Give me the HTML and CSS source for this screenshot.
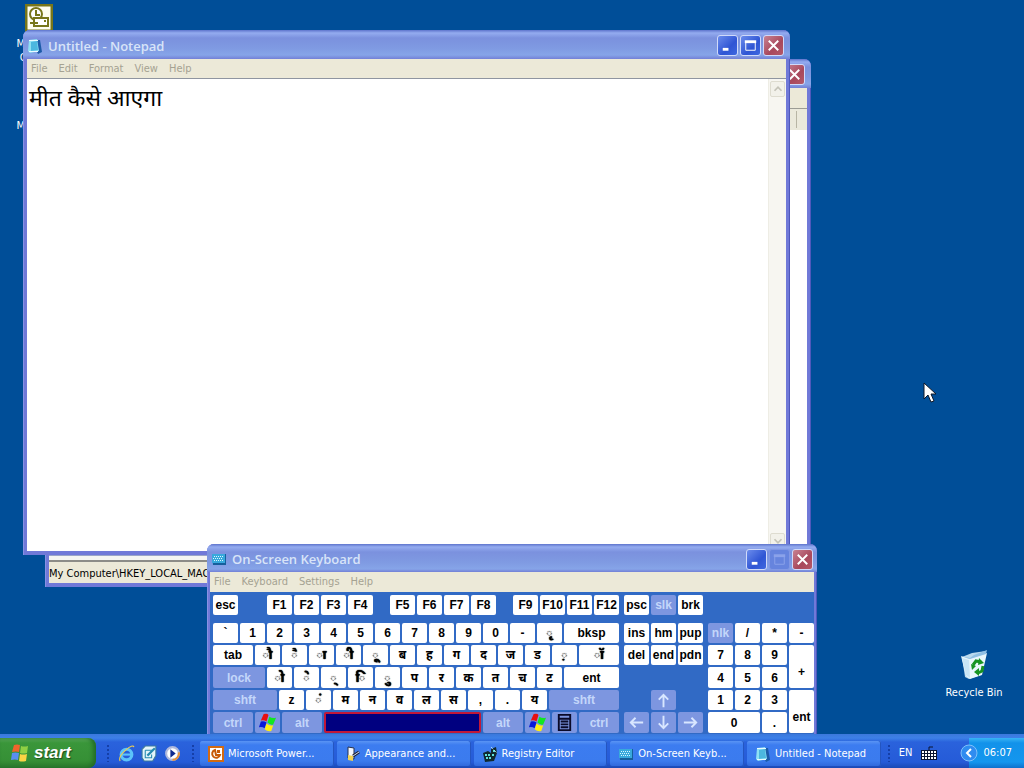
FILE: index.html
```
<!DOCTYPE html>
<html lang="en">
  <head>
    <meta charset="UTF-8" />
    <title>Desktop</title>
    <link rel="stylesheet" href="styles.css">
  </head>
  <body>
    <svg class="defs" aria-hidden="true">
      <symbol id="flag" viewBox="0 0 20 20">
        <path fill="#e81010" d="M6 1q4-1 5 1l-2 7q-3-2-6-1z" />
        <path fill="#10e820" d="M12 4q3 2 7 1l-3 7q-3 1-6-2z" />
        <path fill="#0818d8" d="M3 9q3-1 6 1l-2 6q-3-2-6-1z" />
        <path fill="#ffee10" d="M9 11q3 3 7 2l-2 6q-4 1-7-2z" />
      </symbol>
      <symbol id="pad" viewBox="0 0 16 16">
        <path fill="#1c5ba8" d="M4 2l9 0 2 12-4 2z" />
        <path fill="#8ee0f4" d="M2 2l8-1 2 12-9 2-2-2z" />
        <path fill="#4cb7df" d="M4 4l6-1 1 9-7 1z" />
        <path stroke="#e8fbff" d="M2 2.500h9M2 13.500h9" />
      </symbol>
      <symbol id="keys" viewBox="0 0 16 16">
        <path fill="#155f9c" d="M1 3h14v11H2z" />
        <path fill="#38a9dc" d="M1 3h13v9H1z" />
        <path stroke="#d8f8ff" stroke-dasharray="1 1" d="M3 5.500h9M2 7.500h10M3 9.500h9" />
      </symbol>
    </svg>

    <main class="desktop">
      <a class="shortcut outlook" href="#">
        <svg width="28" height="28" viewBox="0 0 28 28">
          <rect x="1" y="1" width="26" height="26" fill="#fdfdf0" stroke="#77761a" stroke-width="3" />
          <circle cx="11" cy="10" r="6" fill="#fff" stroke="#77761a" stroke-width="2" />
          <path d="M11 6v5h4" fill="none" stroke="#77761a" stroke-width="2" />
          <rect x="9" y="14" width="14" height="8" fill="#fff" stroke="#77761a" stroke-width="2" />
          <path d="M5 19h8M19 17h2" stroke="#77761a" stroke-width="2" />
        </svg>
        <span>Microsoft Outlook</span>
      </a>
      <a class="shortcut network" href="#"><span>Microsoft</span></a>
      <a class="shortcut recycle" href="#">
        <svg width="32" height="32" viewBox="0 0 32 32">
          <path fill="#b9d9ee" d="M4 8l10-4 14-2-5 24-12 4-4-2z" />
          <path fill="#e8f6fc" d="M3 7l8 3 18-6-5 22-12 4-4-3z" />
          <path fill="#8fbfe4" d="M3 7l9 2 4-3 13-5-1 4-16 5z" />
          <path fill="#c8e5f6" d="M4 9l7 2 1 18-4-3z" />
          <path fill="none" stroke="#169322" stroke-width="3" d="M15 16l3-4 5 1M25 17l-1 5-4 2" />
          <path fill="#169322" d="M21 9l5 5-6 2zM21 19v8l-5-4zM13 15l5 2-4 4z" />
        </svg>
        <span>Recycle Bin</span>
      </a>

      <section class="window registry" aria-label="Registry Editor">
        <header class="titlebar">
          <span class="caption"></span>
          <button class="control close" aria-label="Close"><svg viewBox="0 0 20 20"><path d="M5 5l10 10M15 5L5 15" /></svg></button>
        </header>
        <div class="menubar"></div>
        <div class="columns"><i></i></div>
        <div class="pane"></div>
        <div class="hscroll"></div>
        <footer class="statusbar">My Computer\HKEY_LOCAL_MACHINE</footer>
      </section>

      <section class="window notepad" aria-label="Notepad">
        <header class="titlebar">
          <svg class="icon"><use href="#pad" /></svg>
          <span class="caption">Untitled - Notepad</span>
          <button class="control" aria-label="Minimize"><svg viewBox="0 0 20 20"><path class="bar" d="M5 14h6" /></svg></button>
          <button class="control" aria-label="Maximize"><svg viewBox="0 0 20 20"><path class="thin" d="M5 6v9h10V6" /><path class="bar" d="M4 6h12" /></svg></button>
          <button class="control close" aria-label="Close"><svg viewBox="0 0 20 20"><path d="M5 5l10 10M15 5L5 15" /></svg></button>
        </header>
        <nav class="menubar">
          <button>File</button><button>Edit</button><button>Format</button><button>View</button><button>Help</button>
        </nav>
        <div class="editor">
          <textarea aria-label="Text" spellcheck="false">मीत कैसे आएगा</textarea>
          <div class="scroll">
            <button aria-label="Scroll up"><svg viewBox="0 0 16 16"><path d="M4 10l4-4 4 4" /></svg></button>
            <button aria-label="Scroll down"><svg viewBox="0 0 16 16"><path d="M4 6l4 4 4-4" /></svg></button>
          </div>
        </div>
      </section>

      <section class="window osk" aria-label="On-Screen Keyboard">
        <header class="titlebar">
          <svg class="icon"><use href="#keys" /></svg>
          <span class="caption">On-Screen Keyboard</span>
          <button class="control" aria-label="Minimize"><svg viewBox="0 0 20 20"><path class="bar" d="M5 14h6" /></svg></button>
          <button class="control off" disabled aria-label="Maximize"><svg viewBox="0 0 20 20"><path class="thin" d="M5 6v9h10V6" /><path class="bar" d="M4 6h12" /></svg></button>
          <button class="control close" aria-label="Close"><svg viewBox="0 0 20 20"><path d="M5 5l10 10M15 5L5 15" /></svg></button>
        </header>
        <nav class="menubar">
          <button>File</button><button>Keyboard</button><button>Settings</button><button>Help</button>
        </nav>
        <div class="keyboard">
          <div class="frow">
            <div class="keys escape"><button>esc</button></div>
            <div class="keys"><button>F1</button><button>F2</button><button>F3</button><button>F4</button></div>
            <div class="keys"><button>F5</button><button>F6</button><button>F7</button><button>F8</button></div>
            <div class="keys"><button>F9</button><button>F10</button><button>F11</button><button>F12</button></div>
          </div>
          <div class="keys"><button>psc</button><button class="mod">slk</button><button>brk</button></div>
          <div></div>

          <div class="rows">
            <div class="keys"><button>`</button><button>1</button><button>2</button><button>3</button><button>4</button><button>5</button><button>6</button><button>7</button><button>8</button><button>9</button><button>0</button><button>-</button><button class="sign">ृ</button><button class="fill">bksp</button></div>
            <div class="keys"><button class="w40">tab</button><button class="sign">ौ</button><button class="sign">ै</button><button class="sign">ा</button><button class="sign">ी</button><button class="sign">ू</button><button>ब</button><button>ह</button><button>ग</button><button>द</button><button>ज</button><button>ड</button><button class="sign">़</button><button class="sign fill">ॉ</button></div>
            <div class="keys"><button class="mod w52">lock</button><button class="sign">ो</button><button class="sign">े</button><button class="sign">्</button><button class="sign">ि</button><button class="sign">ु</button><button>प</button><button>र</button><button>क</button><button>त</button><button>च</button><button>ट</button><button class="fill">ent</button></div>
            <div class="keys"><button class="mod w64">shft</button><button>z</button><button class="sign">ं</button><button>म</button><button>न</button><button>व</button><button>ल</button><button>स</button><button>,</button><button>.</button><button>य</button><button class="mod fill">shft</button></div>
            <div class="keys">
              <button class="mod w40">ctrl</button>
              <button class="mod" aria-label="Windows"><svg><use href="#flag" /></svg></button>
              <button class="mod w40">alt</button>
              <button class="space fill" aria-label="Space"></button>
              <button class="mod w40">alt</button>
              <button class="mod" aria-label="Windows"><svg><use href="#flag" /></svg></button>
              <button class="mod" aria-label="Menu"><svg viewBox="0 0 20 20"><path fill="none" stroke="#0a0a28" stroke-width="2" d="M4 2h12v16H4zM4 6h12M6 9h8M6 12h8M6 15h8" /></svg></button>
              <button class="mod w40">ctrl</button>
            </div>
          </div>

          <div class="nav">
            <button>ins</button><button>hm</button><button>pup</button>
            <button>del</button><button>end</button><button>pdn</button>
            <button class="mod up" aria-label="Up"><svg viewBox="0 0 20 20"><path class="arrow" d="M10 17V5M5 9l5-5 5 5" /></svg></button>
            <button class="mod left" aria-label="Left"><svg viewBox="0 0 20 20"><path class="arrow" d="M17 10H5M9 5l-5 5 5 5" /></svg></button>
            <button class="mod down" aria-label="Down"><svg viewBox="0 0 20 20"><path class="arrow" d="M10 3v12M5 11l5 5 5-5" /></svg></button>
            <button class="mod right" aria-label="Right"><svg viewBox="0 0 20 20"><path class="arrow" d="M3 10h12M11 5l5 5-5 5" /></svg></button>
          </div>

          <div class="numpad">
            <button class="mod">nlk</button><button>/</button><button>*</button><button>-</button>
            <button>7</button><button>8</button><button>9</button><button class="tall">+</button>
            <button>4</button><button>5</button><button>6</button>
            <button>1</button><button>2</button><button>3</button><button class="tall">ent</button>
            <button class="wide">0</button><button>.</button>
          </div>
        </div>
      </section>

      <svg class="cursor" viewBox="0 0 13 22"><path fill="#fff" stroke="#101828" d="M1 1v16l4-4 3 7 3-1-3-7h5z" /></svg>
    </main>

    <footer class="taskbar">
      <button class="start">
        <svg viewBox="0 0 20 20">
          <path fill="#f0642c" d="M4 2q3-1 6 0l-1 7q-3-1-7 0z" />
          <path fill="#8fd044" d="M11 3q3 1 7 0l-1 7q-4 1-7 0z" />
          <path fill="#5a8ef0" d="M2 10q3-1 7 0l-1 7q-3-1-7 0z" />
          <path fill="#fbd444" d="M10 11q3 1 7 0l-1 7q-4 1-7 0z" />
        </svg>
        start
      </button>
      <i class="grip"></i>
      <nav class="quick">
        <button aria-label="Internet Explorer"><svg viewBox="0 0 16 16"><circle cx="8" cy="9" r="5" fill="none" stroke="#5cc4fa" stroke-width="3" /><path stroke="#5cc4fa" stroke-width="2" d="M4 9h9" /><path d="M2 15Q0 11 7 5t8-3" fill="none" stroke="#f0cf50" stroke-width="1" /></svg></button>
        <button aria-label="Show Desktop"><svg viewBox="0 0 16 16"><path fill="#e4f4fa" stroke="#3c7a9c" d="M1 4l3-3h10v9l-3 5H3l-2-3z" /><path fill="none" stroke="#268ab0" stroke-width="1" d="M4 5h7M4 5v7h6V9" /><path stroke="#268ab0" stroke-width="2" d="M6 10l7-7" /></svg></button>
        <button aria-label="Media Player"><svg viewBox="0 0 16 16"><circle cx="8" cy="8" r="6" fill="#fff" stroke="#b0b9dc" stroke-width="2" /><path fill="none" stroke="#e8913a" stroke-width="2" d="M14 7a6 6 0 0 1-6 7" /><path fill="#102a90" d="M6 4l5 4-5 4z" /></svg></button>
      </nav>
      <i class="grip"></i>
      <div class="tasks">
        <button><svg class="icon" viewBox="0 0 16 16"><rect x="1" y="1" width="14" height="14" fill="#fff" stroke="#d26a12" stroke-width="2" /><path fill="none" stroke="#c85a08" stroke-width="2" d="M7 4a4 4 0 1 0 5 5H8z" /><path fill="#c85a08" d="M9 4h3v3H9z" /></svg>Microsoft Power...</button>
        <button><svg class="icon" viewBox="0 0 16 16"><path fill="#f4f8ff" stroke="#26304c" d="M3 1l6 1v11l-6-1z" /><path fill="#f0d254" d="M3 9l5 1v5l-5-1z" /><path stroke="#223" stroke-width="3" d="M8 10l6-4" /><path stroke="#cfe3ff" d="M8 10l6-4" /></svg>Appearance and...</button>
        <button><svg class="icon" viewBox="0 0 16 16"><path fill="#10292f" d="M1 7l5-2 3 2V3l5-2 1 6-3 8-9 1z" /><path fill="#5fe0da" d="M3 8h2v2H3zM6 8h2v2H6zM4 11h2v2H4zM7 11h2v2H7zM11 4h2v2h-2zM10 8h2v2h-2z" /><path stroke="#d8ffff" stroke-dasharray="1 1" d="M9 1l6 6" /></svg>Registry Editor</button>
        <button><svg class="icon"><use href="#keys" /></svg>On-Screen Keyb...</button>
        <button><svg class="icon"><use href="#pad" /></svg>Untitled - Notepad</button>
      </div>
      <i class="grip"></i>
      <div class="lang">
        EN
        <svg width="16" height="16" viewBox="0 0 16 16"><path fill="none" stroke="#0a1430" d="M8 5V2h4" /><rect x="0" y="5" width="16" height="10" fill="#0a1430" /><path stroke="#fff" stroke-width="2" stroke-dasharray="2 1" d="M1 7h14M1 10h14M1 13h14" /></svg>
      </div>
      <div class="tray">
        <button class="expand" aria-label="Show hidden icons"><svg viewBox="0 0 18 18"><circle cx="9" cy="9" r="8" fill="#2f8cf0" stroke="#7fc0fa" /><path fill="none" stroke="#fff" stroke-width="2" d="M11 5L7 9l4 4" /></svg></button>
        <time>06:07</time>
      </div>
    </footer>
  </body>
</html>
```
FILE: styles.css
```
* {
  box-sizing: border-box;
}
body {
  margin: 0;
  height: 100vh;
  display: flex;
  flex-direction: column;
  overflow: hidden;
  background: #004e98;
  font: 11px/14px "DejaVu Sans Condensed", "Noto Sans", sans-serif;
  color: #000;
}
button {
  margin: 0;
  padding: 0;
  border: none;
  background: transparent;
  font: inherit;
  color: inherit;
}
.defs {
  position: absolute;
  width: 0;
  height: 0;
}
.icon {
  width: 16px;
  height: 16px;
  flex: none;
}

/* desktop */
.desktop {
  position: relative;
  flex: 1;
  overflow: hidden;
}
.shortcut {
  position: absolute;
  width: 64px;
  display: flex;
  flex-direction: column;
  align-items: center;
  gap: 5px;
  color: #fff;
  text-align: center;
  text-decoration: none;
}
.outlook {
  left: 7px;
  top: 4px;
}
.network {
  left: 7px;
  top: 119px;
}
.recycle {
  left: 942px;
  top: 649px;
}
.cursor {
  position: absolute;
  left: 923px;
  top: 382px;
  width: 13px;
  height: 22px;
}

/* windows */
.window {
  position: absolute;
  display: flex;
  flex-direction: column;
  padding: 0 4px 4px;
  border-radius: 7px 7px 0 0;
  background: #7079d8;
  box-shadow: inset 1px 0 #8791e4, inset -1px 0 #5058bc;
}
.registry {
  left: 45px;
  top: 59px;
  width: 766px;
  height: 528px;
}
.notepad {
  left: 23px;
  top: 30px;
  width: 767px;
  height: 525px;
}
.osk {
  left: 207px;
  top: 544px;
  width: 610px;
  padding: 0 3px;
}
.titlebar {
  display: flex;
  align-items: center;
  gap: 2px;
  height: 29px;
  margin: 0 -4px;
  padding: 2px 6px 0 4px;
  border-radius: 7px 7px 0 0;
  background: linear-gradient(#5e74cc, #94acf0 3px, #7b91de 8px, #7f9ae2 18px, #86a4e8 25px, #7380d6);
}
.osk .titlebar {
  height: 28px;
  margin: 0 -3px;
  padding-right: 4px;
}
.caption {
  flex: 1;
  padding-left: 3px;
  font: 600 13px/18px "Open Sans", "Noto Sans", sans-serif;
  color: #d8e4f8;
}
.control {
  width: 21px;
  height: 21px;
  border: 1px solid #d0dafa;
  border-radius: 3px;
  background: linear-gradient(135deg, #6b8cec, #2f55d4 60%, #3e68e0);
}
.control svg {
  display: block;
  width: 19px;
  height: 19px;
}
.control path {
  fill: none;
  stroke: #fff;
  stroke-width: 2;
}
.control .bar {
  stroke-width: 3;
}
.control .thin {
  stroke-width: 1;
}
.close {
  background: linear-gradient(135deg, #c88292, #a8485c 60%, #b45868);
}
.off {
  border-color: #8298e4;
  background: #6684de;
}
.off path {
  stroke: #8ba2ea;
}
.menubar {
  display: flex;
  align-items: center;
  gap: 11px;
  height: 20px;
  padding-left: 4px;
  background: #ece9d8;
  color: #a5a292;
}
.notepad .menubar {
  border-bottom: 1px solid #8f95a0;
}
.editor {
  flex: 1;
  display: flex;
  background: #fff;
}
textarea {
  flex: 1;
  padding: 2px;
  border: none;
  outline: none;
  resize: none;
  background: #fff;
  font: 23px/32px "Noto Sans", "Noto Sans Devanagari", sans-serif;
}
.scroll {
  width: 18px;
  display: flex;
  flex-direction: column;
  justify-content: space-between;
  padding: 2px 1px;
  background: #f7f6f1;
  border-left: 1px solid #eeede5;
}
.scroll button {
  height: 16px;
  border: 1px solid #dedcd0;
  border-radius: 2px;
  background: #f2f1ea;
}
.scroll svg {
  display: block;
  width: 14px;
  height: 14px;
}
.scroll path {
  fill: none;
  stroke: #c4c3b8;
  stroke-width: 2;
}
.columns {
  display: flex;
  justify-content: flex-end;
  height: 22px;
  padding: 2px;
  border-top: 1px solid #9c9c94;
  background: #ebe9db;
}
.columns i {
  width: 9px;
  border-left: 1px solid #b8b5a4;
}
.pane {
  flex: 1;
  background: #fff;
}
.hscroll {
  height: 7px;
  border-top: 1px solid #9aa5c8;
  border-bottom: 2px solid #8c8c88;
  background: #f5f5f2;
}
.statusbar {
  height: 21px;
  padding: 5px 0;
  background: #ece9d8;
  white-space: nowrap;
}

/* on-screen keyboard */
.keyboard {
  display: grid;
  grid-template-columns: 406px 79px 106px;
  gap: 8px 5px;
  padding: 3px;
  background: #316ac5;
  font: bold 12px/20px "Liberation Sans", "Noto Sans Devanagari", sans-serif;
}
.keys {
  display: flex;
  gap: 2px;
}
.frow {
  display: flex;
  gap: 17px;
}
.escape {
  margin-right: 12px;
}
.rows,
.nav,
.numpad {
  display: grid;
  grid-template-rows: 20px 20px 21px 20px 21px;
  gap: 2px;
}
.nav {
  grid-template-columns: repeat(3, 25px);
}
.numpad {
  grid-template-columns: repeat(4, 25px);
}
.keyboard button {
  width: 25px;
  min-height: 20px;
  display: flex;
  align-items: center;
  justify-content: center;
  border-radius: 2px;
  background: #fff;
}
.keyboard svg {
  width: 19px;
  height: 19px;
}
.keyboard .mod {
  background: #7d96e0;
  color: #c4d6fa;
}
/* the dotted circle under vowel signs is too faint at this size */
.keyboard .sign {
  text-shadow: 0 0 1px #000, 0 0 1px #000;
}
.keyboard .w40 {
  width: 40px;
}
.keyboard .w52 {
  width: 52px;
}
.keyboard .w64 {
  width: 64px;
}
.keyboard .fill {
  flex: 1;
}
.keyboard .space {
  border: 2px solid #c01838;
  background: #000080;
}
.keyboard .tall {
  grid-row: span 2;
  height: auto;
  padding-top: 10px;
}
.keyboard .wide {
  grid-column: span 2;
  width: auto;
}
.nav .up {
  grid-area: 4 / 2;
}
.nav .left {
  grid-area: 5 / 1;
}
.nav .down {
  grid-area: 5 / 2;
}
.nav .right {
  grid-area: 5 / 3;
}
.arrow {
  fill: none;
  stroke: #d8e6ff;
  stroke-width: 2;
}

/* taskbar */
.taskbar {
  height: 34px;
  display: flex;
  align-items: stretch;
  padding-top: 4px;
  background: linear-gradient(#3a78dc, #3c80e8 4px, #2a62dc 8px, #255bd8 28px, #1b49b4);
  color: #fff;
}
.start {
  width: 96px;
  display: flex;
  align-items: center;
  gap: 4px;
  padding-left: 10px;
  border-radius: 0 8px 8px 0;
  background: linear-gradient(#5fae5e, #3a963a 5px, #369036 22px, #2a7a2c);
  box-shadow: inset -3px 0 4px #226c28;
  font: italic bold 17px/20px "Liberation Sans", sans-serif;
  text-shadow: 1px 1px 1px #1c4c1c;
}
.start svg {
  width: 20px;
  height: 20px;
}
.grip {
  width: 4px;
  margin: 6px 0 6px 10px;
  background: radial-gradient(circle, #153fa8 1px, transparent 1px) 0 0 / 4px 4px;
}
.quick {
  display: flex;
  align-items: center;
  gap: 6px;
  padding-left: 8px;
}
.quick button {
  width: 17px;
  height: 17px;
}
.quick svg {
  display: block;
}
.tasks {
  flex: 1;
  display: flex;
  gap: 3px;
  padding: 3px 0 2px 5px;
}
.tasks button {
  flex: 1;
  display: flex;
  align-items: center;
  gap: 4px;
  padding-left: 8px;
  border-radius: 2px;
  background: linear-gradient(#5a94f4, #3c7cf0 4px, #3b7bee 20px, #3069dc);
  box-shadow: inset -1px 0 #2455c0;
  white-space: nowrap;
}
.tasks + .grip {
  margin-left: 6px;
}
.lang {
  display: flex;
  align-items: center;
  gap: 9px;
  padding: 0 32px 0 8px;
}
.tray {
  display: flex;
  align-items: center;
  gap: 5px;
  padding-right: 12px;
  background: linear-gradient(#38b4f4, #1292ea 5px, #1496ee 24px, #0e70cc);
}
.expand {
  width: 18px;
  height: 18px;
  margin-left: -9px;
}
.expand svg {
  display: block;
}
```
